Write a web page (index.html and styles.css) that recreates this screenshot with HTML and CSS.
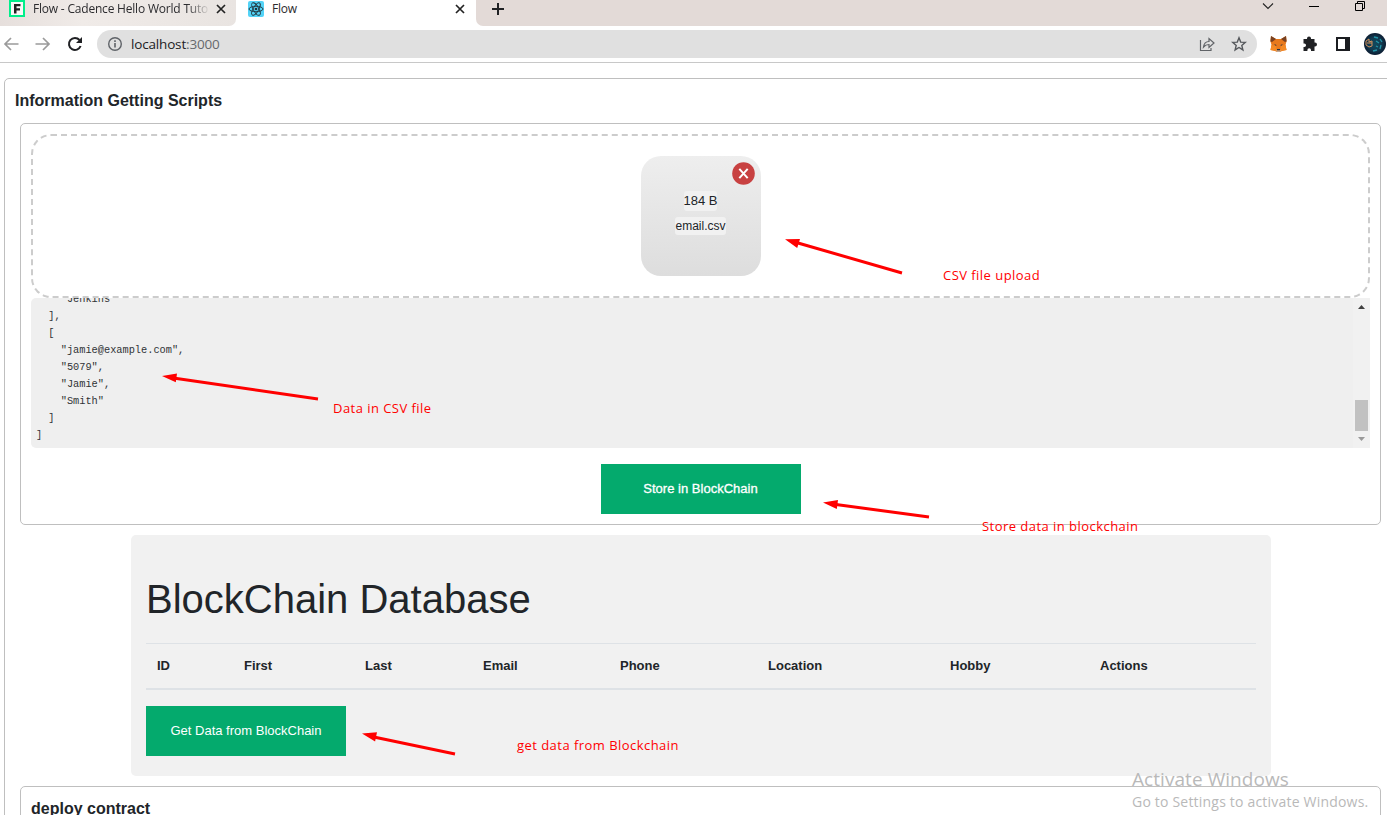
FILE: index.html
```html
<!DOCTYPE html>
<html lang="en">
<head>
<meta charset="utf-8">
<title>Flow</title>
<link rel="stylesheet" href="styles.css">
</head>
<body>
<header class="browser">
  <div class="tabstrip">
    <div class="tab tab-idle">
      <svg class="favicon" width="16" height="18" viewBox="0 0 16 18"><rect x="1" y="1" width="14" height="15" fill="#f8f8f8" stroke="#00ef8b" stroke-width="2"/><path d="M5 4h6.500v2.300H7.500v1.900h3.500v2.200H7.500V13.500H5z" fill="#222"/></svg>
      <span class="tab-title fade">Flow - Cadence Hello World Tuto</span>
      <svg class="close" width="10" height="10" viewBox="0 0 10 10"><path d="M1 1l8 8M9 1L1 9"/></svg>
    </div>
    <div class="tab tab-active">
      <svg class="favicon" width="16" height="16" viewBox="0 0 16 16"><rect width="16" height="16" rx="2" fill="#53d3f7"/><g fill="none" stroke="#20333b" stroke-width=".9"><ellipse cx="8" cy="8" rx="7" ry="2.700"/><ellipse cx="8" cy="8" rx="7" ry="2.700" transform="rotate(60 8 8)"/><ellipse cx="8" cy="8" rx="7" ry="2.700" transform="rotate(120 8 8)"/></g><circle cx="8" cy="8" r="1.300" fill="#20333b"/></svg>
      <span class="tab-title">Flow</span>
      <svg class="close" width="10" height="10" viewBox="0 0 10 10"><path d="M1 1l8 8M9 1L1 9"/></svg>
    </div>
    <div class="tab-rest">
      <svg width="12" height="12" viewBox="0 0 12 12"><path d="M6 0v12M0 6h12" stroke="#202124" stroke-width="2"/></svg>
      <div class="window-controls">
        <svg width="12" height="7" viewBox="0 0 12 7"><path d="M1 .5l5 5 5-5" fill="none" stroke="#222" stroke-width="1.100"/></svg>
        <svg width="10" height="2" viewBox="0 0 10 2"><path d="M0 .5h10" stroke="#000"/></svg>
        <svg width="10" height="10" viewBox="0 0 10 10"><path d="M2.500 2.500v-2h7v7h-2M.5 2.500h7v7h-7z" fill="none" stroke="#000"/></svg>
      </div>
    </div>
  </div>
  <div class="toolbar">
    <svg width="16" height="14" viewBox="0 0 16 14"><path d="M15.500 7H2M8 1L2 7l6 6" fill="none" stroke="#9b9b9b" stroke-width="1.700"/></svg>
    <svg class="forward" width="16" height="14" viewBox="0 0 16 14"><path d="M.5 7H14M8 1l6 6-6 6" fill="none" stroke="#9b9b9b" stroke-width="1.700"/></svg>
    <svg class="reload" width="16" height="16" viewBox="0 0 16 16"><path d="M13.600 10A6 6 0 1 1 12.500 4" fill="none" stroke="#202124" stroke-width="2"/><path d="M15 1v6H9z" fill="#202124"/></svg>
    <div class="address">
      <svg width="16" height="16" viewBox="0 0 16 16"><circle cx="8" cy="8" r="6.300" fill="none" stroke="#5f6368" stroke-width="1.400"/><path d="M8 7v4.500M8 4.300V6" stroke="#5f6368" stroke-width="1.600"/></svg>
      <span class="url">localhost<span class="port">:3000</span></span>
      <svg class="share" width="16" height="16" viewBox="0 0 16 16"><path d="M1.500 4v10.500H12V12M4.500 11c.5-4 2.500-5.500 5.500-5.500V2.500L15 7l-5 4.500V8.500c-2.500 0-4 .7-5.500 2.500z" fill="none" stroke="#606367" stroke-width="1.200"/></svg>
      <svg width="16" height="16" viewBox="0 0 16 16"><path d="M8 1.800l1.700 4.300 4.600.3-3.500 3 1.100 4.500L8 11.500l-3.900 2.400 1.100-4.500-3.500-3 4.600-.3z" fill="none" stroke="#55585c" stroke-width="1.400"/></svg>
    </div>
    <svg class="fox" width="17" height="16" viewBox="0 0 17 16"><path d="M1 0l5 3h5l5-3 .6 5-1.100 4 1 5-4.500 1-2 1H7l-2-1-4.500-1 1-5L.4 5z" fill="#e8791c"/><path d="M1 0l5 3-4 3-1.600-.5zM16 0l-5 3 4 3 1.600-.5z" fill="#774122"/><path d="M1.500 9l4.500 1 1 5-6.500-1zM15.500 9L11 10l-1 5 6.500-1z" fill="#f58a24"/><path d="M4 8l2.500 1-.5 1zM13 8l-2.500 1 .5 1zM7 13h3v1.500H7z" fill="#243447"/><path d="M5.500 14.500h6l-2 1.500h-2z" fill="#c0ad9e"/></svg>
    <svg class="puzzle" width="16" height="16" viewBox="0 0 16 16"><path d="M5 3V2.500a2 2 0 0 1 4 0V3h3.500V6.500h.5a2 2 0 0 1 0 4h-.5V15H9v-1a1.800 1.800 0 0 0-3.600 0v1H1.500v-4h.8a1.700 1.700 0 0 0 0-3.500h-.8V3z" fill="#202124"/></svg>
    <svg class="panel-icon" width="14" height="14" viewBox="0 0 14 14"><path d="M0 0h14v14H0zM2 2v10h7V2z" fill="#1b1d21" fill-rule="evenodd"/></svg>
    <svg class="avatar" width="22" height="22" viewBox="0 0 22 22"><defs><radialGradient id="globe"><stop offset="0" stop-color="#10495d"/><stop offset=".6" stop-color="#123a50"/><stop offset="1" stop-color="#0b1c31"/></radialGradient></defs><circle cx="11" cy="11" r="11" fill="url(#globe)"/><path d="M10 4l4 1M16 6l2 3M12 8l3 2M17 12l-1 4M9 18l4-1M12 13l2 1" fill="none" stroke="#2395a8" stroke-width="1.300"/><path d="M2 8l3-2v3l3-1v5l-3 1-3-2zM3 10h5" fill="none" stroke="#d0905c"/></svg>
  </div>
</header>

<main class="page">
  <section class="box outer">
    <h2 class="box-title">Information Getting Scripts</h2>
    <div class="box upload">
      <div class="dropzone">
        <div class="file">
          <svg class="remove" width="23" height="23" viewBox="0 0 23 23"><circle cx="11.500" cy="11.500" r="11.300" fill="#c84141"/><path d="M7.300 6.800l8.400 9.400M15.700 6.800l-8.400 9.400" stroke="#fff" stroke-width="2"/></svg>
          <span class="file-size">184 B</span>
          <span class="file-name">email.csv</span>
        </div>
      </div>
      <div class="code">
<pre class="json">    "Jenkins"
  ],
  [
    "jamie@example.com",
    "5079",
    "Jamie",
    "Smith"
  ]
]</pre>
        <div class="scrollbar">
          <svg width="7" height="4" viewBox="0 0 7 4"><path d="M0 4L3.500 0 7 4z" fill="#404040"/></svg>
          <div class="thumb"></div>
          <svg width="7" height="4" viewBox="0 0 7 4"><path d="M0 0l3.500 4L7 0z" fill="#999"/></svg>
        </div>
      </div>
      <button class="btn btn-store">Store in BlockChain</button>
    </div>
    <div class="database">
      <h1>BlockChain Database</h1>
      <div class="columns">
        <span>ID</span><span>First</span><span>Last</span><span>Email</span><span>Phone</span><span>Location</span><span>Hobby</span><span>Actions</span>
      </div>
      <button class="btn btn-get">Get Data from BlockChain</button>
    </div>
    <div class="box deploy"><h2 class="box-title">deploy contract</h2></div>
  </section>
</main>

<svg class="arrows" width="1387" height="815" viewBox="0 0 1387 815">
  <g stroke="#f00" stroke-width="3"><path d="M902 273L798 243M318 399L175 378.300M929 517L836 504.500M455 754L375 737.200"/></g>
  <g fill="#f00"><path d="M785 239.300l15-.2-2.800 8.800zM162 376l15-2.600-1.200 8.800zM823 502.500l15-2.400-1.200 8.800zM362 733.600l15-1.300-1.900 9.200z"/></g>
</svg>
<span class="note note-upload">CSV file upload</span>
<span class="note note-data">Data in CSV file</span>
<span class="note note-store">Store data in blockchain</span>
<span class="note note-get">get data from Blockchain</span>
<div class="watermark">
  <div class="wm-title">Activate Windows</div>
  <div class="wm-sub">Go to Settings to activate Windows.</div>
</div>
</body>
</html>
```
FILE: styles.css
```css
* { box-sizing: border-box; }
html, body { height: 100%; }
body {
  margin: 0;
  overflow: hidden;
  display: flex;
  flex-direction: column;
  background: #fff;
  color: #212529;
  font-family: "Liberation Sans", Arial, sans-serif;
}
svg { display: block; flex: none; }
h1, h2, pre { margin: 0; }

/* Browser frame */
.browser {
  flex: none;
  height: 63px;
  border-bottom: 1px solid #c8c8c8;
  font-family: "Open Sans", sans-serif;
}
.tabstrip { display: flex; height: 26px; background: #fff; }
.tab { display: flex; align-items: flex-start; padding-top: 1px; }
.tab-idle {
  width: 236px;
  padding-left: 9px;
  background: linear-gradient(90deg, #e6dfdc, #f0ebe8 35%, #e9e4e1);
  border-bottom-right-radius: 7px;
}
.tab-idle .favicon { margin-top: -1px; }
.tab-active { width: 240px; padding-left: 12px; }
.tab-title {
  flex: 1;
  margin-left: 8px;
  font-size: 12px;
  line-height: 16px;
  letter-spacing: -0.2px;
  white-space: nowrap;
  overflow: hidden;
  color: #2b2b2e;
}
.fade {
  flex: none;
  width: 177px;
  margin-right: 6px;
  -webkit-mask-image: linear-gradient(90deg, #000 87%, transparent);
  mask-image: linear-gradient(90deg, #000 87%, transparent);
}
.close { margin: 3px 0 0; stroke: #222; stroke-width: 1.700; }
.tab-active .close { margin-right: 11px; }
.tab-rest {
  flex: 1;
  display: flex;
  justify-content: space-between;
  padding: 3px 22px 0 16px;
  background: #e3dad7;
  border-bottom-left-radius: 7px;
}
.window-controls { display: flex; gap: 35px; }
.window-controls svg:nth-child(2) { margin-top: 3px; }
.window-controls svg:nth-child(3) { margin-top: -2px; margin-left: 1px; }
.toolbar { display: flex; align-items: center; height: 36px; padding-left: 3px; }
.forward { margin-left: 16px; }
.reload { margin-left: 16px; }
.address {
  display: flex;
  align-items: center;
  width: 1160px;
  height: 28px;
  margin-left: 14px;
  padding: 0 10px;
  border-radius: 14px;
  background: #e0e0e0;
}
.url { margin-left: 8px; flex: 1; font-size: 13.500px; letter-spacing: -0.17px; color: #202124; }
.port { color: #66696d; }
.share { margin-right: 16px; }
.fox { margin-left: 13px; }
.puzzle { margin-left: 15px; }
.panel-icon { margin-left: 18px; }
.avatar { margin-left: 14px; }

/* Page */
.page { flex: 1; min-height: 0; overflow: hidden; padding: 15px 0 0 4px; }
.box { border: 1px solid #bfbfbf; border-radius: 5px; }
.box-title { font-size: 16px; line-height: 24px; }
.outer { width: 1392px; padding: 10px 10px; }
.upload {
  display: flex;
  flex-direction: column;
  width: 1361px;
  height: 402px;
  margin: 10px 0 10px 5px;
  padding: 10px;
}
.dropzone {
  display: flex;
  justify-content: center;
  align-items: flex-start;
  height: 164px;
  padding-top: 20px;
  border: 2px dashed #ccc;
  border-radius: 20px;
}
.file {
  position: relative;
  display: flex;
  flex-direction: column;
  align-items: center;
  width: 120px;
  height: 120px;
  padding-top: 35px;
  border-radius: 20px;
  background: linear-gradient(#eee, #ddd);
}
.remove { position: absolute; top: 6px; right: 6px; }
.file-size, .file-name { border-radius: 3px; background: #f1f1f1; }
.file-size { height: 20px; font-size: 13px; line-height: 19px; }
.file-name { height: 18px; margin-top: 6px; font-size: 12px; line-height: 18px; }
.code {
  display: flex;
  justify-content: space-between;
  height: 150px;
  overflow: hidden;
  border-radius: 5px 0 0 5px;
  background: #efefef;
}
.json {
  margin: -7px 0 0 5px;
  font: 10.300px/17px "Liberation Mono", monospace;
  color: #303336;
}
.scrollbar {
  display: flex;
  flex-direction: column;
  align-items: center;
  width: 17px;
  padding-top: 7px;
  background: #f1f1f1;
}
.thumb { width: 13px; height: 31px; margin: 91px 0 6px; background: #c1c1c1; }
.btn {
  width: 200px;
  height: 50px;
  padding: 0 0 1px;
  border: 0;
  background: #04aa6d;
  color: #fff;
  font: 13px "Liberation Sans", Arial, sans-serif;
}
.btn-store { align-self: center; margin-top: 16px; letter-spacing: 0.02px; -webkit-text-stroke: 0.300px #fff; }
.database {
  width: 1140px;
  height: 241px;
  margin: 0 0 10px 116px;
  padding: 40px 15px 0;
  border-radius: 5px;
  background: #f1f1f1;
}
h1 { font-size: 40px; line-height: 48px; font-weight: 400; }
.columns {
  display: grid;
  grid-template-columns: 87px 121px 118px 137px 148px 182px 150px 1fr;
  height: 47px;
  margin: 20px 0 16px;
  padding-left: 11px;
  border-top: 1px solid #dee2e6;
  border-bottom: 2px solid #dee2e6;
  font-size: 13px;
  font-weight: 700;
  line-height: 44px;
}
.deploy { width: 1361px; height: 150px; margin-left: 5px; padding: 10px; }

/* Annotations drawn over the page */
.arrows { position: absolute; inset: 0; }
.note {
  position: absolute;
  font: 13px/20px "Open Sans", sans-serif;
  letter-spacing: 0.46px;
  color: #f00;
  white-space: nowrap;
}
.note-upload { left: 943px; top: 265px; }
.note-data { left: 333px; top: 398px; }
.note-store { left: 982px; top: 516px; }
.note-get { left: 517px; top: 735px; }
.watermark {
  position: absolute;
  left: 1132px;
  top: 766px;
  font-family: "Open Sans", sans-serif;
  color: #b9b9b9;
  white-space: nowrap;
}
.wm-title { font-size: 19px; line-height: 26px; letter-spacing: 0.06px; }
.wm-sub { font-size: 14px; line-height: 20px; letter-spacing: 0.2px; }
```
